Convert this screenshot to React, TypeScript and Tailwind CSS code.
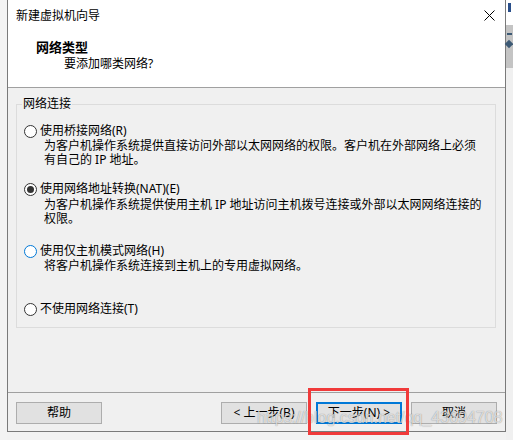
import React from "react";

const FONT = { fontFamily: '"Noto Sans", "Noto Sans CJK SC", sans-serif' };

function Radio({ checked, focus }: { checked?: boolean; focus?: boolean }) {
  return (
    <span
      className={
        "w-[13px] h-[13px] shrink-0 rounded-full bg-white border flex items-center justify-center " +
        (focus ? "border-[#0078d7]" : "border-[#333333]")
      }
    >
      {checked && <span className="w-[7px] h-[7px] rounded-full bg-[#333333]" />}
    </span>
  );
}

function Btn({ children, primary }: { children: React.ReactNode; primary?: boolean }) {
  return (
    <div
      className={
        "w-[86px] h-[22px] shrink-0 bg-[#e1e1e1] flex items-center justify-center text-[12px] leading-[14px] text-black " +
        (primary ? "border-2 border-[#0078d7]" : "border border-[#adadad]")
      }
    >
      {children}
    </div>
  );
}

export default function App() {
  return (
    <div className="w-[513px] h-[440px] bg-[#f2f2f2] flex overflow-hidden relative text-black" style={FONT}>
      <div className="w-[7px] shrink-0 bg-[#f3f3f3]" />
      <div className="w-[499px] h-[432px] shrink-0 flex flex-col border-x border-b border-[#7a7a7a] bg-[#f0f0f0]">
        <div className="h-[87px] shrink-0 bg-white flex flex-col">
          <div className="h-[31px] flex items-center justify-between pl-[8px] pr-[10px]">
            <span className="text-[12px] leading-[14px]">新建虚拟机向导</span>
            <svg width="11" height="11" viewBox="0 0 11 11">
              <path d="M0.5 0.5 L10.5 10.5 M10.5 0.5 L0.5 10.5" stroke="#000" strokeWidth="1" fill="none" />
            </svg>
          </div>
          <div className="pl-[28px] pt-[8px] text-[13px] leading-[16px] font-bold">网络类型</div>
          <div className="pl-[56px] mt-[1px] text-[12px] leading-[16px]">要添加哪类网络?</div>
        </div>
        <div className="h-px shrink-0 bg-[#a0a0a0]" />
        <div className="flex-1 flex flex-col">
          <div className="mt-[16px] ml-[8px] mr-[9px] border border-[#dcdcdc] relative pb-[10px] text-[12px]">
            <span className="absolute left-[5px] -top-[8px] px-[1px] bg-[#f0f0f0] leading-[14px]">网络连接</span>

            <div className="mt-[18px]">
              <div className="h-[16px] flex items-center pl-[7px] gap-[3px]">
                <Radio />
                <span className="leading-[16px]">使用桥接网络(R)</span>
              </div>
              <div className="pl-[27px] leading-[14px]">
                为客户机操作系统提供直接访问外部以太网网络的权限。客户机在外部网络上必须
                <br />
                有自己的 IP 地址。
              </div>
            </div>

            <div className="mt-[14px]">
              <div className="h-[16px] flex items-center pl-[7px] gap-[3px]">
                <Radio checked />
                <span className="leading-[16px]">使用网络地址转换(NAT)(E)</span>
              </div>
              <div className="pl-[27px] mt-[1px] leading-[14px]">
                为客户机操作系统提供使用主机 IP 地址访问主机拨号连接或外部以太网网络连接的
                <br />
                权限。
              </div>
            </div>

            <div className="mt-[17px]">
              <div className="h-[16px] flex items-center pl-[7px] gap-[3px]">
                <Radio focus />
                <span className="leading-[16px]">使用仅主机模式网络(H)</span>
              </div>
              <div className="pl-[27px] leading-[14px]">将客户机操作系统连接到主机上的专用虚拟网络。</div>
            </div>

            <div className="mt-[28px]">
              <div className="h-[16px] flex items-center pl-[7px] gap-[3px]">
                <Radio />
                <span className="leading-[16px]">不使用网络连接(T)</span>
              </div>
            </div>
          </div>

          <div className="mt-[64px] h-px shrink-0 bg-[#a0a0a0]" />

          <div className="mt-[9px] flex px-[8px]">
            <Btn>帮助</Btn>
            <div className="flex-1" />
            <div className="flex gap-[9px]">
              <Btn>&lt; 上一步(B)</Btn>
              <Btn primary>下一步(N) &gt;</Btn>
              <Btn>取消</Btn>
            </div>
          </div>
        </div>
      </div>
      <div className="w-[7px] shrink-0 flex flex-col">
        <div className="h-[25px] bg-white relative">
          <div className="absolute left-[2px] top-[3px] w-[3px] h-[9px] bg-[#2a4f8a]" />
        </div>
        <div className="h-[43px] bg-[#c4c4c4] relative">
          <div className="absolute left-[1px] top-[8px] w-[5px] h-[2px] bg-[#3d5a75]" />
          <div className="absolute left-[0px] top-[16px] w-[6px] h-[6px] bg-[#3d5a75] rotate-45" />
        </div>
        <div className="flex-1 bg-[#f0f0f0]" />
      </div>

      <div
        className="absolute left-[257px] top-[410px] text-[16px] leading-[16px] text-white/70 whitespace-nowrap [text-shadow:0_0_1px_rgba(0,0,0,0.45)]"
        style={{ fontFamily: '"Liberation Sans", sans-serif' }}
      >
        https://blog.csdn.net/qq_43694708
      </div>
      <div className="absolute left-[308px] top-[388px] w-[101px] h-[47px] border-[3px] border-[#f03a3a]" />
    </div>
  );
}
